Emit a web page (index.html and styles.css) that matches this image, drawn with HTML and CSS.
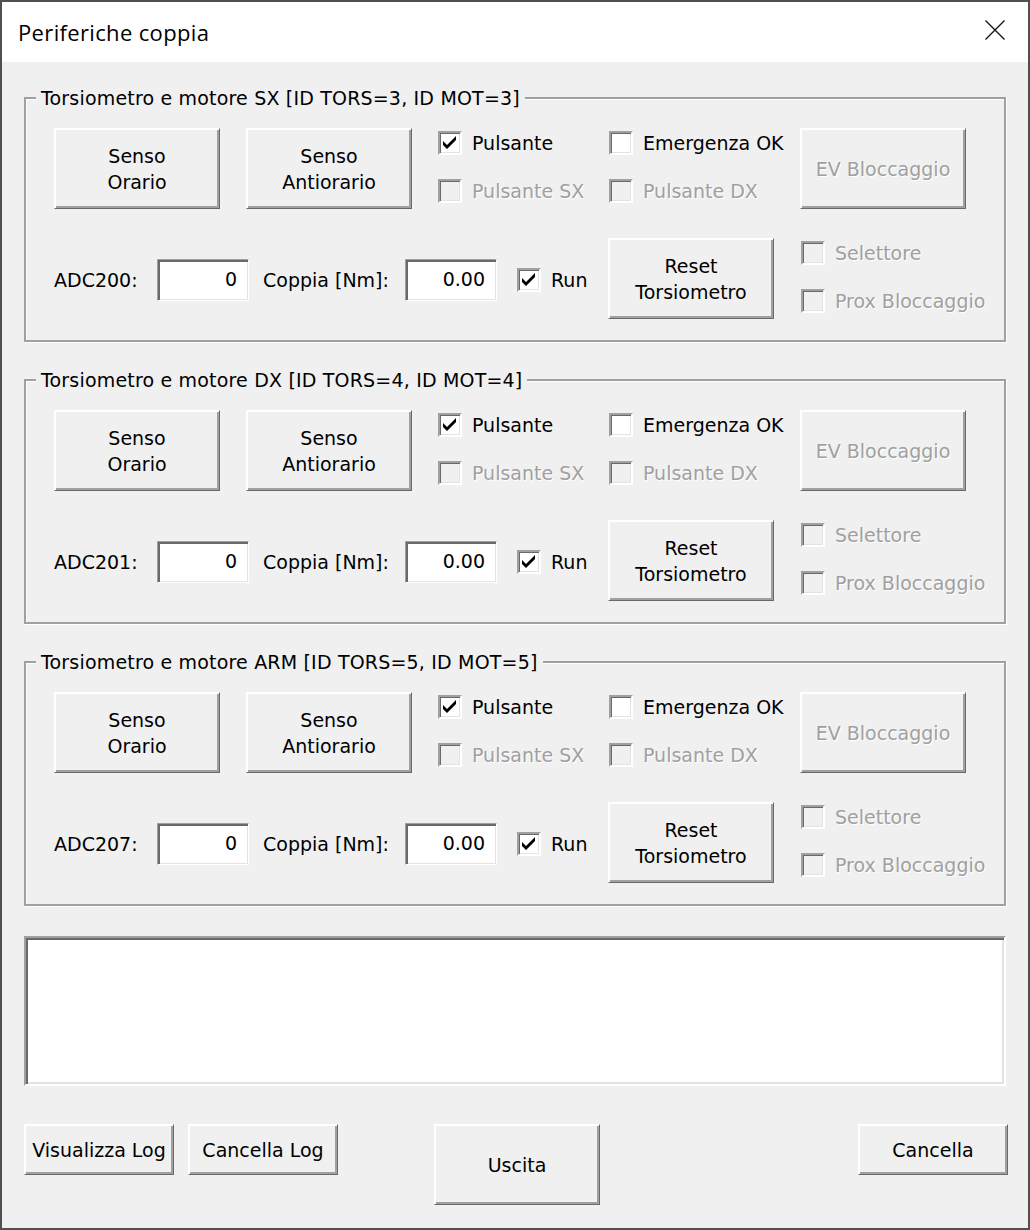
FILE: index.html
```html
<!DOCTYPE html>
<html lang="it">
<head>
<meta charset="utf-8">
<title>Periferiche coppia</title>
<link rel="stylesheet" href="styles.css">
</head>
<body>
<div class="window">
  <div class="titlebar">
    <span class="title">Periferiche coppia</span>
    <svg class="close" width="20" height="20" viewBox="0 0 20 20"><path d="M0.5 0.5L19.5 19.5M19.5 0.5L0.5 19.5" stroke="#111" stroke-width="1.3" fill="none"/></svg>
  </div>
  <div class="client">

    <fieldset class="group">
      <legend>Torsiometro e motore SX [ID TORS=3, ID MOT=3]</legend>
      <div class="group-body">
        <div class="row row-top">
          <button class="btn">Senso<br>Orario</button>
          <button class="btn ml26">Senso<br>Antiorario</button>
          <div class="check-col col-a">
            <label class="check"><span class="box"><svg width="20" height="20" viewBox="0 0 20 20"><polygon points="3,8 7,12 16,3 16,7 7,16 3,12" fill="#000"/></svg></span><span class="lbl">Pulsante</span></label>
            <label class="check disabled"><span class="box"></span><span class="lbl">Pulsante SX</span></label>
          </div>
          <div class="check-col col-b">
            <label class="check"><span class="box"></span><span class="lbl">Emergenza OK</span></label>
            <label class="check disabled"><span class="box"></span><span class="lbl">Pulsante DX</span></label>
          </div>
          <button class="btn" disabled>EV Bloccaggio</button>
        </div>
        <div class="row row-bottom">
          <span class="cap cap-adc">ADC200:</span>
          <span class="edit">0</span>
          <span class="cap cap-coppia">Coppia [Nm]:</span>
          <span class="edit">0.00</span>
          <label class="check run"><span class="box"><svg width="20" height="20" viewBox="0 0 20 20"><polygon points="3,8 7,12 16,3 16,7 7,16 3,12" fill="#000"/></svg></span><span class="lbl">Run</span></label>
          <button class="btn">Reset<br>Torsiometro</button>
          <div class="check-col col-c">
            <label class="check disabled"><span class="box"></span><span class="lbl">Selettore</span></label>
            <label class="check disabled"><span class="box"></span><span class="lbl">Prox Bloccaggio</span></label>
          </div>
        </div>
      </div>
    </fieldset>

    <fieldset class="group">
      <legend>Torsiometro e motore DX [ID TORS=4, ID MOT=4]</legend>
      <div class="group-body">
        <div class="row row-top">
          <button class="btn">Senso<br>Orario</button>
          <button class="btn ml26">Senso<br>Antiorario</button>
          <div class="check-col col-a">
            <label class="check"><span class="box"><svg width="20" height="20" viewBox="0 0 20 20"><polygon points="3,8 7,12 16,3 16,7 7,16 3,12" fill="#000"/></svg></span><span class="lbl">Pulsante</span></label>
            <label class="check disabled"><span class="box"></span><span class="lbl">Pulsante SX</span></label>
          </div>
          <div class="check-col col-b">
            <label class="check"><span class="box"></span><span class="lbl">Emergenza OK</span></label>
            <label class="check disabled"><span class="box"></span><span class="lbl">Pulsante DX</span></label>
          </div>
          <button class="btn" disabled>EV Bloccaggio</button>
        </div>
        <div class="row row-bottom">
          <span class="cap cap-adc">ADC201:</span>
          <span class="edit">0</span>
          <span class="cap cap-coppia">Coppia [Nm]:</span>
          <span class="edit">0.00</span>
          <label class="check run"><span class="box"><svg width="20" height="20" viewBox="0 0 20 20"><polygon points="3,8 7,12 16,3 16,7 7,16 3,12" fill="#000"/></svg></span><span class="lbl">Run</span></label>
          <button class="btn">Reset<br>Torsiometro</button>
          <div class="check-col col-c">
            <label class="check disabled"><span class="box"></span><span class="lbl">Selettore</span></label>
            <label class="check disabled"><span class="box"></span><span class="lbl">Prox Bloccaggio</span></label>
          </div>
        </div>
      </div>
    </fieldset>

    <fieldset class="group">
      <legend>Torsiometro e motore ARM [ID TORS=5, ID MOT=5]</legend>
      <div class="group-body">
        <div class="row row-top">
          <button class="btn">Senso<br>Orario</button>
          <button class="btn ml26">Senso<br>Antiorario</button>
          <div class="check-col col-a">
            <label class="check"><span class="box"><svg width="20" height="20" viewBox="0 0 20 20"><polygon points="3,8 7,12 16,3 16,7 7,16 3,12" fill="#000"/></svg></span><span class="lbl">Pulsante</span></label>
            <label class="check disabled"><span class="box"></span><span class="lbl">Pulsante SX</span></label>
          </div>
          <div class="check-col col-b">
            <label class="check"><span class="box"></span><span class="lbl">Emergenza OK</span></label>
            <label class="check disabled"><span class="box"></span><span class="lbl">Pulsante DX</span></label>
          </div>
          <button class="btn" disabled>EV Bloccaggio</button>
        </div>
        <div class="row row-bottom">
          <span class="cap cap-adc">ADC207:</span>
          <span class="edit">0</span>
          <span class="cap cap-coppia">Coppia [Nm]:</span>
          <span class="edit">0.00</span>
          <label class="check run"><span class="box"><svg width="20" height="20" viewBox="0 0 20 20"><polygon points="3,8 7,12 16,3 16,7 7,16 3,12" fill="#000"/></svg></span><span class="lbl">Run</span></label>
          <button class="btn">Reset<br>Torsiometro</button>
          <div class="check-col col-c">
            <label class="check disabled"><span class="box"></span><span class="lbl">Selettore</span></label>
            <label class="check disabled"><span class="box"></span><span class="lbl">Prox Bloccaggio</span></label>
          </div>
        </div>
      </div>
    </fieldset>

    <div class="log"></div>

    <div class="bottom">
      <button class="btn btn-sm">Visualizza Log</button>
      <button class="btn btn-sm ml14">Cancella Log</button>
      <button class="btn btn-exit">Uscita</button>
      <button class="btn btn-sm btn-cancel">Cancella</button>
    </div>
  </div>
</div>
</body>
</html>
```
FILE: styles.css
```css
* { box-sizing: border-box; }
html, body { margin: 0; padding: 0; }
body {
  width: 1030px;
  height: 1230px;
  background: #3a4450;
  font-family: "DejaVu Sans", sans-serif;
  font-size: 19px;
  color: #000;
}
.window {
  width: 1030px;
  height: 1230px;
  border: 2px solid #505050;
  background: #f0f0f0;
  display: flex;
  flex-direction: column;
}
.titlebar {
  height: 60px;
  flex: none;
  background: #fff;
  display: flex;
  align-items: center;
  padding-left: 16px;
}
.title {
  font-family: "Open Sans", "Noto Sans", sans-serif;
  font-size: 22px;
  letter-spacing: 0.35px;
  color: #000;
}
.close {
  margin-left: auto;
  margin-right: 23px;
  align-self: flex-start;
  margin-top: 18px;
}
.client {
  flex: 1;
  padding: 25px 22px 0 22px;
}
.group {
  margin: 0;
  padding: 0;
  width: 982px;
  min-inline-size: 0;
  border: 2px solid #a0a0a0;
  box-shadow: inset 1px 1px #fff, 1px 1px #fff;
}
.group + .group { margin-top: 27px; }
.group legend {
  padding: 0 5px;
  margin-left: 10px;
  line-height: 22px;
  letter-spacing: 0.18px;
  background: #f0f0f0;
}
.group-body {
  padding: 19px 0 21px 28px;
}
.row {
  display: flex;
  align-items: flex-start;
  height: 81px;
}
.row-bottom { margin-top: 29px; }

.btn {
  font: inherit;
  color: #000;
  width: 166px;
  height: 81px;
  flex: none;
  padding: 0;
  line-height: 26px;
  background: #f0f0f0;
  border: 1px solid;
  border-color: #fff #696969 #696969 #fff;
  box-shadow: inset 1px 1px #fff, inset -2px -2px #a0a0a0;
}
.btn:disabled {
  color: #a0a0a0;
  text-shadow: 1px 1px #fff;
}
.ml26 { margin-left: 26px; }
.ml14 { margin-left: 14px; }

.check-col {
  display: flex;
  flex-direction: column;
  gap: 24px;
  padding-top: 3px;
  flex: none;
}
.col-a { margin-left: 26px; width: 171px; }
.col-b { width: 191px; }
.col-c { margin-left: 27px; }

.check {
  display: flex;
  align-items: center;
  height: 24px;
  white-space: nowrap;
}
.box {
  width: 24px;
  height: 24px;
  flex: none;
  border: 2px solid;
  border-color: #a0a0a0 #fff #fff #a0a0a0;
  box-shadow: inset 1px 1px #696969, inset -1px -1px #e3e3e3;
  background: #fff;
  display: flex;
}
.box svg { display: block; }
.lbl { margin-left: 10px; }
.check.disabled .box { background: #f0f0f0; }
.check.disabled .lbl {
  color: #a0a0a0;
  text-shadow: 1px 1px #fff;
}

.cap {
  flex: none;
  line-height: 22px;
  margin-top: 31px;
  white-space: nowrap;
}
.cap-adc { width: 103px; }
.cap-coppia { width: 156px; padding-left: 14px; }
.edit {
  flex: none;
  width: 92px;
  height: 42px;
  margin-top: 21px;
  background: #fff;
  border: 1px solid;
  border-color: #a0a0a0 #fff #fff #a0a0a0;
  box-shadow: inset 2px 2px #696969, inset -1px -1px #e3e3e3;
  text-align: right;
  padding-right: 11px;
  line-height: 38px;
}
.run {
  margin-left: 20px;
  width: 91px;
  margin-top: 30px;
  flex: none;
}

.log {
  margin-top: 30px;
  width: 982px;
  height: 150px;
  background: #fff;
  border: 2px solid;
  border-color: #a0a0a0 #fff #fff #a0a0a0;
  box-shadow: inset 2px 2px #696969, inset -2px -2px #e3e3e3;
}
.bottom {
  display: flex;
  align-items: flex-start;
  margin-top: 38px;
}
.btn-sm { width: 150px; height: 51px; }
.btn-exit { margin-left: 96px; }
.btn-cancel { margin-left: 258px; }
```
